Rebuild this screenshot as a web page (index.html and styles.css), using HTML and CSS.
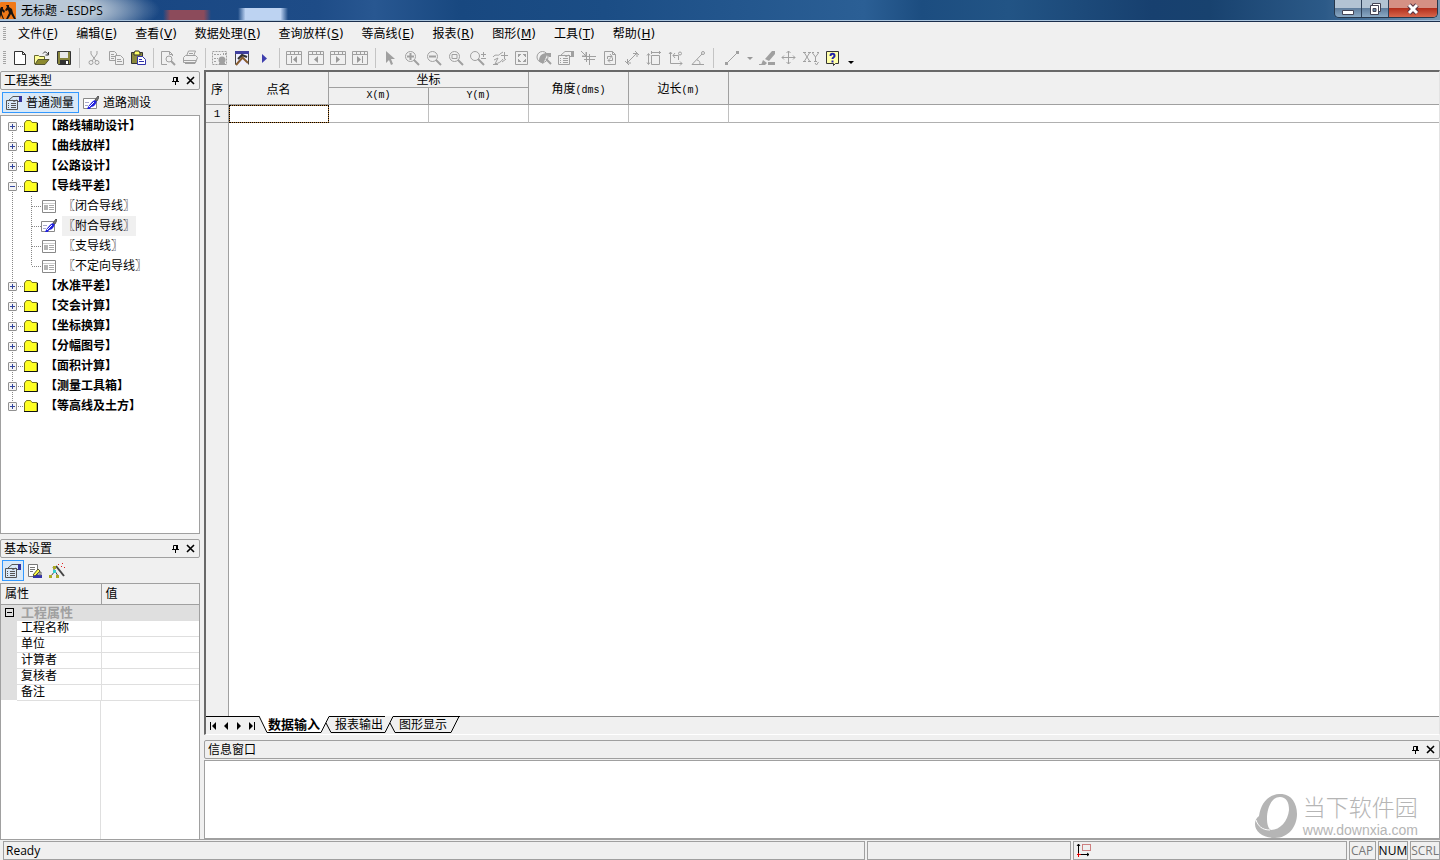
FILE: index.html
```
<!DOCTYPE html>
<html lang="zh-CN">
<head>
<meta charset="utf-8">
<title>无标题 - ESDPS</title>
<link rel="stylesheet" href="styles.css">
</head>
<body>
<svg class="defs" aria-hidden="true">
  <symbol id="new" viewBox="0 0 16 16"><path d="M2.500 1.500h8l3 3v10h-11zM10.500 1.500v3h3" fill="#fff" stroke="#333"/></symbol>
  <symbol id="open" viewBox="0 0 16 16"><path d="M.5 14V5.500h4l1 1h5v3" fill="#ff9" stroke="#663"/><path d="M1 14.500l3-5h11l-4 5z" fill="#8c8a2e" stroke="#553"/><path d="M9 3.500c2-3 4-1 5 1M14.500 2v3h-3" fill="none" stroke="#333"/></symbol>
  <symbol id="save" viewBox="0 0 16 16"><path d="M1.500 1.500h13v13h-12l-1-1z" fill="#86843c" stroke="#333"/><path d="M4 2h8v6H4z" fill="#e8e8e8"/><path d="M4 10h9v4H4z" fill="#333"/><path d="M10 11h2v3h-2z" fill="#fff"/></symbol>
  <symbol id="cut" viewBox="0 0 16 16"><path d="M5 1v3l5 7M11 1v3L6 11" class="ln"/><circle cx="5" cy="12.500" r="2" class="ln"/><circle cx="11" cy="12.500" r="2" class="ln"/></symbol>
  <symbol id="copy" viewBox="0 0 16 16"><path d="M1.500 1.500h5l2 2v7h-7zM3 4.500h3M3 6.500h4M3 8.500h3" class="ln"/><path d="M7.500 5.500h5l3 3v6h-8zM9 9.500h4M9 11.500h5" class="ln pale"/></symbol>
  <symbol id="paste" viewBox="0 0 16 16"><path d="M1.500 2.500h11v11h-11z" fill="#8c8a3c" stroke="#333"/><path d="M4 3l1-2h4l1 2v2H4z" fill="#ff6" stroke="#333"/><path d="M7.500 6.500h5l3 3v5h-8z" fill="#fff" stroke="#33a"/><path d="M9 9.500h3M9 11.500h5" stroke="#33a"/></symbol>
  <symbol id="preview" viewBox="0 0 16 16"><path d="M7 14.500H1.500v-13h8l3 3V6M9.500 1.500v3h3" class="ln"/><circle cx="9" cy="9" r="3" class="ln"/><path d="M11 11l4 4" class="thick"/></symbol>
  <symbol id="print" viewBox="0 0 16 16"><path d="M4.500 6l2-5h7l-2 5M7 3.500h4M1.500 7.500l2-2h10l2 2-2 5h-12zM2 10.500h12M3 13.500h10l1-2" class="ln"/></symbol>
  <symbol id="calc" viewBox="0 0 16 16"><path d="M.5 1.500h14v13H.5zM2 4.500h7M2 8.500h4M2 11.500h3M11.500 3v3M13.500 3v3" class="ln" stroke-dasharray="2 1"/><circle cx="10" cy="10" r="3.500" fill="#a0a0a0"/><path d="M7 13h6v2H7z" fill="#a0a0a0"/></symbol>
  <symbol id="hammer" viewBox="0 0 16 16"><path d="M1.500 14.500v-13h13v13" fill="#eef" stroke="#444"/><path d="M1 1h14v3H1z" fill="#3f3f9d"/><path d="M7 6l7 7M2 15l7-8" stroke="#875d30" stroke-width="2"/><path d="M4 9l4-4 5 2" fill="none" stroke="#333" stroke-width="2"/></symbol>
  <symbol id="run" viewBox="0 0 16 16"><path d="M6 4l5 4.500L6 13z" fill="#3f3fae"/></symbol>
  <symbol id="frame" viewBox="0 0 16 16"><path d="M.5 1.500h15v13H.5zM1 4.500h14M4.500 2v2M8.500 2v2M12.500 2v2" class="ln"/></symbol>
  <symbol id="cursor" viewBox="0 0 16 16"><path d="M4 1v12l3-3 2 5 2-1-2-5h4z" fill="#a0a0a0"/></symbol>
  <symbol id="glass" viewBox="0 0 16 16"><circle cx="6.500" cy="6.500" r="5" class="ln"/><path d="M10 10l5 5" class="thick"/></symbol>
  <symbol id="zoomin" viewBox="0 0 16 16"><use href="#glass"/><path d="M3 6.500h7M6.500 3v7" class="thick"/></symbol>
  <symbol id="zoomout" viewBox="0 0 16 16"><use href="#glass"/><path d="M3 6.500h7" class="thick"/></symbol>
  <symbol id="zoomwin" viewBox="0 0 16 16"><use href="#glass"/><path d="M4 4.500h5v4H4z" class="ln"/></symbol>
  <symbol id="zoomvar" viewBox="0 0 16 16"><circle cx="5" cy="6" r="4.500" class="ln"/><path d="M8 9l6 6" class="thick"/><path d="M11 4.500h5M13.500 2v5M11 8.500h5" class="ln"/></symbol>
  <symbol id="pan" viewBox="0 0 16 16"><path d="M1 7c3-4 5 0 7-3l3-2M2 10l4-2-3 6c4-1 6-2 8-5M9 5.500h7M12.500 2v7M10 12l4-3M1 14.500h5" class="ln"/></symbol>
  <symbol id="extent" viewBox="0 0 16 16"><path d="M1.500 1.500h12v13h-12zM4.500 7V4.500H7M9 4.500h2.500V7M11.500 9v2.500H9M7 11.500H4.500V9" class="ln"/><path d="M4 4l2 2M12 4l-2 2M12 12l-2-2M4 12l2-2" class="ln"/></symbol>
  <symbol id="find" viewBox="0 0 16 16"><circle cx="6.500" cy="7" r="5.500" class="ln"/><path d="M3 11c0-6 4-8 8-8h4v4h-2l-2-2-4 9z" fill="#a0a0a0"/><path d="M10 9l5 5" class="thick"/></symbol>
  <symbol id="props" viewBox="0 0 16 16"><path d="M.5 5.500h11v9H.5zM2 8.500h1M5 8.500h5M2 10.500h1M5 10.500h5M2 12.500h1M5 12.500h5M3 5l4-3.500h6M6 5l2 1.500L11 5l2 2" fill="none" stroke="currentColor"/><path d="M13 1h3v6h-3z" fill="var(--cuff)"/></symbol>
  <symbol id="cross" viewBox="0 0 16 16"><path d="M1 1l5 5M2 6.500h14M4 9.500h11M6.500 2v10M9.500 4v11M6 2v4H2" class="ln"/></symbol>
  <symbol id="refresh" viewBox="0 0 16 16"><path d="M2.500 1.500h8l3 3v10h-11zM10.500 1.500v3h3M5.500 9V6.500H10M8 4l2 2.500-2 2M10.500 7.500v3H6M8 8.500l-2 2 2 2" class="ln"/></symbol>
  <symbol id="dist" viewBox="0 0 16 16"><path d="M3 13L13 3M9 3.500h4V7M3.500 9v4H7M1 11l4 4M11 1l4 4" class="ln"/></symbol>
  <symbol id="rect" viewBox="0 0 16 16"><path d="M5.500 5.500h8v9h-8zM5 2.500h10M5.500 1v3M13.500 1v3M2.500 4v10M1 5.500l1.500-2 1.500 2M1 12.500l1.500 2 1.500-2" class="ln"/></symbol>
  <symbol id="coord" viewBox="0 0 16 16"><path d="M2.500 2v11.500H14M1 4l1.500-2L4 4M12 11.500l2 2-2 2M5 5.500h5.500V10M7 3L5 5.500 7 8" class="ln"/><circle cx="12" cy="3.500" r="1.500" class="ln"/></symbol>
  <symbol id="angle" viewBox="0 0 16 16"><path d="M14 14.500H2L12 4M7 10c2 0 3 2 3 4" class="ln"/><circle cx="13" cy="3" r="1.500" class="ln"/></symbol>
  <symbol id="line" viewBox="0 0 16 16"><path d="M2 14L14 2" class="ln"/><path d="M1 12h3v3H1zM12 1h3v3h-3z" fill="#a0a0a0"/></symbol>
  <symbol id="erase" viewBox="0 0 16 16"><path d="M6 9l7-8h3v3l-6 7zM4 10l4 3-2 2H2zM9 12h7v3H9zM0 14h5v1H0z" fill="#a0a0a0"/></symbol>
  <symbol id="move" viewBox="0 0 16 16"><path d="M7.500 1v13M1 7.500h13M5.500 3l2-2 2 2M5.500 12l2 2 2-2M3 5.500l-2 2 2 2M12 5.500l2 2-2 2" class="ln"/></symbol>
  <symbol id="xy" viewBox="0 0 16 16"><path d="M1.500 3l5 8M6.500 3l-5 8M0 2.500h3M5 2.500h3M0 11.500h3M5 11.500h3M9.500 3l3 4 3-4M12.500 7v4M9 2.500h2M14 2.500h2M11 11.500h3M12 13l1.500 2 2-3" class="ln"/></symbol>
  <symbol id="help" viewBox="0 0 16 16"><path d="M1.500 1.500h12v12h-3l-2 2v-2h-7z" fill="#ffa" stroke="#333"/><path d="M5.500 6c0-3 4-3 4 0 0 1.500-2 1-2 3" fill="none" stroke="#22a" stroke-width="2"/><path d="M6.500 10.500h2v2h-2z" fill="#22a"/></symbol>
  <symbol id="pen" viewBox="0 0 16 16"><path d="M.5 3.500h13v10H.5z" fill="#fff" stroke="#888"/><path d="M4 14c2-4 5-8 8-9l2 1c-1 3-3 6-6 6l-1 2z" fill="#22d"/><path d="M6 12l5-5" stroke="#fff"/><path d="M12 5l3-4 1 1-2 4z" fill="#777" stroke="#555"/><path d="M2 10.500h3M2 7.500h4" stroke="#aac"/></symbol>
  <symbol id="form" viewBox="0 0 16 16"><path d="M1.500 2.500h13v12h-13z" fill="#fff" stroke="#888"/><path d="M2 5.500h12" stroke="#ccc"/><path d="M3 7h4v5H3z" fill="#b5b5b5"/><path d="M8 7.500h5M8 9.500h5M8 11.500h5" stroke="#aaa"/></symbol>
  <symbol id="folder" viewBox="0 0 16 16"><path d="M1.500 5l2-2.500h4l1.500 2h5v9h-12.500z" fill="#ff2" stroke="#77751c"/><path d="M1 13.500h13.500V5" fill="none" stroke="#111"/></symbol>
  <symbol id="note" viewBox="0 0 16 16"><path d="M1.500 1.500h9v12h-9zM3 4.500h5M3 6.500h5M3 8.500h3" fill="#fff" stroke="#777"/><path d="M6 12h9v3H6z" fill="#33a"/><path d="M6 12l5-6 2 2-5 5z" fill="#ff4" stroke="#553"/><path d="M12 9h2v3h-2z" fill="#e8e8e8" stroke="#666"/></symbol>
  <symbol id="wand" viewBox="0 0 16 16"><path d="M7 3l8 10" stroke="#444" stroke-width="2"/><path d="M2 13l4-5 3 5M4 4l2 5" fill="none" stroke="#444"/><path d="M4 7h3v3H4z" fill="#3cc"/><path d="M0 12h3v3H0zM7 12h3v3H7zM4 3h3v3H4z" fill="#aa2"/><path d="M9 1h1v1H9zM13 0h1v1h-1zM15 4h1v1h-1zM12 3h1v1h-1z" fill="#d22"/></symbol>
  <symbol id="pin" viewBox="0 0 9 9"><path d="M2.500 5V1.500h4V5M1 5.500h7M4.500 6v3" fill="none" stroke="#000"/><path d="M5 1h2v4H5z"/></symbol>
  <symbol id="close" viewBox="0 0 9 9"><path d="M1 1l7 7M8 1L1 8" stroke="#000" stroke-width="1.600"/></symbol>
</svg>

<header class="titlebar">
  <svg class="logo" viewBox="0 0 16 18"><rect width="16" height="17" rx="1" fill="#f07818"/><path d="M1 5h2v2l2 2-1 2-2-2v3l2 5H3l-2-4-1 3V7zM6 3h3v2l3 2 1 4 3 6h-2l-3-5-3 5H6l3-6-1-3-2 1-1-1 2-3z" fill="#1b1410"/></svg>
  <h1>无标题 - ESDPS</h1>
  <div class="winbtns">
    <button aria-label="最小化"><svg viewBox="0 0 14 14"><path d="M1.500 8.500h11v4h-11z" fill="#fff" stroke="#445"/></svg></button>
    <button aria-label="还原"><svg viewBox="0 0 14 14"><path d="M4.500 1.500h8v8h-8z" fill="#fff" stroke="#445"/><path d="M2.500 3.500h8v9h-8z" fill="#fff" stroke="#445"/><path d="M5 6.500h3v3H5z" fill="#68a" stroke="#445"/></svg></button>
    <button class="quit" aria-label="关闭"><svg viewBox="0 0 14 14"><path d="M3 3l8 8M11 3l-8 8" stroke="#534" stroke-width="5"/><path d="M3 3l8 8M11 3l-8 8" stroke="#fff" stroke-width="3"/></svg></button>
  </div>
</header>

<nav class="menubar">
  <button>文件(<u>F</u>)</button><button>编辑(<u>E</u>)</button><button>查看(<u>V</u>)</button><button>数据处理(<u>R</u>)</button><button>查询放样(<u>S</u>)</button><button>等高线(<u>E</u>)</button><button>报表(<u>R</u>)</button><button>图形(<u>M</u>)</button><button>工具(<u>T</u>)</button><button>帮助(<u>H</u>)</button>
</nav>

<div class="toolbar">
  <button aria-label="新建"><svg><use href="#new"/></svg></button>
  <button aria-label="打开"><svg><use href="#open"/></svg></button>
  <button aria-label="保存"><svg><use href="#save"/></svg></button>
  <i class="sep"></i>
  <button aria-label="剪切"><svg><use href="#cut"/></svg></button>
  <button aria-label="复制"><svg><use href="#copy"/></svg></button>
  <button aria-label="粘贴"><svg><use href="#paste"/></svg></button>
  <i class="sep"></i>
  <button aria-label="打印预览"><svg><use href="#preview"/></svg></button>
  <button aria-label="打印"><svg><use href="#print"/></svg></button>
  <i class="sep"></i>
  <button aria-label="计算设置"><svg><use href="#calc"/></svg></button>
  <button aria-label="工具"><svg><use href="#hammer"/></svg></button>
  <button aria-label="运行"><svg><use href="#run"/></svg></button>
  <i class="sep"></i>
  <button aria-label="首条"><svg viewBox="0 0 16 16"><use href="#frame"/><path d="M5 6h1v7H5zM11 6v7L7 9.500z" fill="#999"/></svg></button>
  <button aria-label="上一条"><svg viewBox="0 0 16 16"><use href="#frame"/><path d="M10 6v7L6 9.500z" fill="#999"/></svg></button>
  <button aria-label="下一条"><svg viewBox="0 0 16 16"><use href="#frame"/><path d="M6 6v7l4-3.500z" fill="#999"/></svg></button>
  <button aria-label="末条"><svg viewBox="0 0 16 16"><use href="#frame"/><path d="M5 6v7l4-3.500zM10 6h1v7h-1z" fill="#999"/></svg></button>
  <i class="sep"></i>
  <button aria-label="选择"><svg><use href="#cursor"/></svg></button>
  <button aria-label="放大"><svg><use href="#zoomin"/></svg></button>
  <button aria-label="缩小"><svg><use href="#zoomout"/></svg></button>
  <button aria-label="窗口缩放"><svg><use href="#zoomwin"/></svg></button>
  <button aria-label="动态缩放"><svg><use href="#zoomvar"/></svg></button>
  <button aria-label="平移"><svg><use href="#pan"/></svg></button>
  <button aria-label="全图"><svg><use href="#extent"/></svg></button>
  <button aria-label="查找"><svg><use href="#find"/></svg></button>
  <button aria-label="属性"><svg><use href="#props"/></svg></button>
  <button aria-label="捕捉"><svg><use href="#cross"/></svg></button>
  <button aria-label="刷新"><svg><use href="#refresh"/></svg></button>
  <button aria-label="距离"><svg><use href="#dist"/></svg></button>
  <button aria-label="面积"><svg><use href="#rect"/></svg></button>
  <button aria-label="坐标"><svg><use href="#coord"/></svg></button>
  <button aria-label="角度"><svg><use href="#angle"/></svg></button>
  <i class="sep wide"></i>
  <button aria-label="画线"><svg><use href="#line"/></svg></button>
  <button class="drop" aria-label="线型"></button>
  <button aria-label="擦除"><svg><use href="#erase"/></svg></button>
  <button aria-label="移动"><svg><use href="#move"/></svg></button>
  <button aria-label="坐标标注"><svg><use href="#xy"/></svg></button>
  <button aria-label="帮助"><svg><use href="#help"/></svg></button>
  <button class="drop more" aria-label="更多"></button>
</div>

<main class="work">
  <aside class="side">
    <section class="pane types">
      <header class="caption"><h2>工程类型</h2><button aria-label="固定"><svg><use href="#pin"/></svg></button><button aria-label="关闭"><svg><use href="#close"/></svg></button></header>
      <div class="modes">
        <button class="on"><svg><use href="#props"/></svg><span>普通测量</span></button>
        <button><svg><use href="#pen"/></svg><span>道路测设</span></button>
      </div>
      <ul class="tree">
        <li><div class="row"><button class="exp" aria-label="展开"></button><svg><use href="#folder"/></svg><span>【路线辅助设计】</span></div></li>
        <li><div class="row"><button class="exp" aria-label="展开"></button><svg><use href="#folder"/></svg><span>【曲线放样】</span></div></li>
        <li><div class="row"><button class="exp" aria-label="展开"></button><svg><use href="#folder"/></svg><span>【公路设计】</span></div></li>
        <li><div class="row"><button class="exp opened" aria-label="折叠"></button><svg><use href="#folder"/></svg><span>【导线平差】</span></div>
          <ul>
            <li><svg><use href="#form"/></svg><span>〖闭合导线〗</span></li>
            <li><svg><use href="#pen"/></svg><span class="picked">〖附合导线〗</span></li>
            <li><svg><use href="#form"/></svg><span>〖支导线〗</span></li>
            <li><svg><use href="#form"/></svg><span>〖不定向导线〗</span></li>
          </ul>
        </li>
        <li><div class="row"><button class="exp" aria-label="展开"></button><svg><use href="#folder"/></svg><span>【水准平差】</span></div></li>
        <li><div class="row"><button class="exp" aria-label="展开"></button><svg><use href="#folder"/></svg><span>【交会计算】</span></div></li>
        <li><div class="row"><button class="exp" aria-label="展开"></button><svg><use href="#folder"/></svg><span>【坐标换算】</span></div></li>
        <li><div class="row"><button class="exp" aria-label="展开"></button><svg><use href="#folder"/></svg><span>【分幅图号】</span></div></li>
        <li><div class="row"><button class="exp" aria-label="展开"></button><svg><use href="#folder"/></svg><span>【面积计算】</span></div></li>
        <li><div class="row"><button class="exp" aria-label="展开"></button><svg><use href="#folder"/></svg><span>【测量工具箱】</span></div></li>
        <li><div class="row"><button class="exp" aria-label="展开"></button><svg><use href="#folder"/></svg><span>【等高线及土方】</span></div></li>
      </ul>
    </section>
    <section class="pane settings">
      <header class="caption"><h2>基本设置</h2><button aria-label="固定"><svg><use href="#pin"/></svg></button><button aria-label="关闭"><svg><use href="#close"/></svg></button></header>
      <div class="modes">
        <button class="on" aria-label="属性"><svg><use href="#props"/></svg></button>
        <button aria-label="编辑"><svg><use href="#note"/></svg></button>
        <button aria-label="向导"><svg><use href="#wand"/></svg></button>
      </div>
      <div class="props">
        <table>
          <colgroup><col class="gutter"><col class="name"><col></colgroup>
          <thead><tr><th colspan="2">属性</th><th>值</th></tr></thead>
          <tbody>
            <tr class="group"><td><button class="fold" aria-label="折叠"></button></td><th colspan="2">工程属性</th></tr>
            <tr><td></td><th>工程名称</th><td></td></tr>
            <tr><td></td><th>单位</th><td></td></tr>
            <tr><td></td><th>计算者</th><td></td></tr>
            <tr><td></td><th>复核者</th><td></td></tr>
            <tr><td></td><th>备注</th><td></td></tr>
          </tbody>
        </table>
        <div class="blank"></div>
      </div>
    </section>
  </aside>

  <div class="center">
    <section class="sheet">
      <div class="gridarea">
        <table class="grid">
          <colgroup><col class="num"><col class="data"><col class="data"><col class="data"><col class="data"><col class="data"><col></colgroup>
          <thead>
            <tr><th rowspan="2">序</th><th rowspan="2">点名</th><th colspan="2">坐标</th><th rowspan="2">角度<span class="mono">(dms)</span></th><th rowspan="2">边长<span class="mono">(m)</span></th><th rowspan="2" class="rest"></th></tr>
            <tr><th class="mono">X(m)</th><th class="mono">Y(m)</th></tr>
          </thead>
          <tbody><tr><th class="mono">1</th><td class="cur"></td><td></td><td></td><td></td><td></td><td class="rest"></td></tr></tbody>
        </table>
      </div>
      <div class="tabs">
        <div class="nav">
          <button aria-label="第一页"><svg viewBox="0 0 8 8"><path d="M1 0h1v8H1zM7 0v8L3 4z"/></svg></button>
          <button aria-label="上一页"><svg viewBox="0 0 8 8"><path d="M6 0v8L2 4z"/></svg></button>
          <button aria-label="下一页"><svg viewBox="0 0 8 8"><path d="M2 0v8l4-4z"/></svg></button>
          <button aria-label="最后一页"><svg viewBox="0 0 8 8"><path d="M1 0v8l4-4zM6 0h1v8H6z"/></svg></button>
        </div>
        <svg class="edge" viewBox="0 0 8 17" width="8" height="17"><path d="M0 0h8v17z" fill="#fff"/><path d="M0 0l8 16.500" stroke="#000"/></svg>
        <button class="tab active">数据输入</button>
        <svg class="edge" viewBox="0 0 12 17" width="12" height="17"><path d="M0 0h8L0 17z" fill="#fff"/><path d="M0 16.500L8 .5h4M5 7l5 9.500h2" fill="none" stroke="#000"/></svg>
        <button class="tab">报表输出</button>
        <svg class="edge" viewBox="0 0 12 17" width="12" height="17"><path d="M0 16.500L8 .5h4M5 7l5 9.500h2" fill="none" stroke="#000"/></svg>
        <button class="tab last">图形显示</button>
        <svg class="edge" viewBox="0 0 9 17" width="9" height="17"><path d="M0 16.500L8 .5M0 .5h9" fill="none" stroke="#000"/></svg>
        <div class="fill"></div>
      </div>
    </section>
    <section class="info">
      <header class="caption"><h2>信息窗口</h2><button aria-label="固定"><svg><use href="#pin"/></svg></button><button aria-label="关闭"><svg><use href="#close"/></svg></button></header>
      <div class="log">
        <div class="mark">
          <svg viewBox="0 0 42 44"><path fill-rule="evenodd" d="M24 0C35-1 42 8 42 20c0 13-9 24-22 24C8 44 0 38 0 30c0-3 1-6 4-8C6 10 12 1 24 0zM25 3c-9 0-13 12-13 21 0 6 1 10 4 12 9 0 17-9 18-20 0-8-3-13-9-13z" fill="#b5b5b5"/><path d="M1 26c2 6 6 10 14 10" fill="none" stroke="#fff"/></svg>
          <div><strong>当下软件园</strong><span>www.downxia.com</span></div>
        </div>
      </div>
    </section>
  </div>
</main>

<footer class="status">
  <span class="msg">Ready</span><span class="pos"></span>
  <span class="axis"><svg viewBox="0 0 16 14"><path d="M2.500 1v11M1 3l1.500-2L4 3M2 11.500h11M11 10l2 1.500-2 1.500" fill="none" stroke="#000"/><path d="M6.500 1.500h8v6h-8z" fill="none" stroke="#a11" stroke-dasharray="1 1"/><path d="M1 11h4v1H1zM2 10h1v4H2z" fill="#d00"/></svg></span>
  <span class="key">CAP</span><span class="key lit">NUM</span><span class="key">SCRL</span>
</footer>
</body>
</html>
```
FILE: styles.css
```
* { box-sizing: border-box; }
body {
  margin: 0;
  height: 100vh;
  display: flex;
  flex-direction: column;
  background: #f0f0f0;
  color: #000;
  font: 12px/16px "DejaVu Sans", "Noto Sans CJK SC", sans-serif;
  overflow: hidden;
}
button { margin: 0; padding: 0; border: 0; background: none; font: inherit; color: inherit; }
h1, h2 { margin: 0; font: inherit; }
ul { margin: 0; padding: 0; list-style: none; }
table { border-collapse: collapse; width: 100%; }
th, td { padding: 0; font-weight: normal; }
svg { display: block; width: 16px; height: 16px; flex: none; }
.defs { display: none; }
.ln { fill: none; stroke: #a0a0a0; }
.pale { fill: #f0f0f0; }
.thick { fill: none; stroke: #a0a0a0; stroke-width: 2; }

.titlebar {
  flex: none;
  display: flex;
  height: 22px;
  border-bottom: 1px solid #1b2f4c;
  box-shadow: inset 0 -1px #a9c3dc;
  background:
    linear-gradient(90deg, transparent, #bdd3f2 15% 85%, transparent) 238px 8px / 50px 14px no-repeat,
    linear-gradient(90deg, transparent, #8c4b5b 15% 85%, transparent) 163px 10px / 48px 12px no-repeat,
    radial-gradient(ellipse 110px 28px at 50px 10px, #bac8d7 40%, transparent 100%),
    linear-gradient(90deg, #6b88a8 0, #194783 10%, #1e4c87 22%, #285791 26%, #184880 32%, #1b4d85 42%, #2b5f95 60%, #1c4d80 64%, #225485 70%, #17406f 80%, #18426f 84%, #2c5a88 92%, #7899b5 100%);
}
.logo { width: 16px; height: 18px; margin-top: 2px; }
.titlebar h1 { flex: 1; padding-left: 5px; line-height: 22px; font-family: "Open Sans", "Noto Sans CJK SC", sans-serif; }
.winbtns {
  display: flex;
  height: 18px;
  margin-right: 2px;
  border: 1px solid #26374b;
  border-top: 0;
  border-radius: 0 0 5px 5px;
  overflow: hidden;
}
.winbtns button { width: 27px; display: grid; place-items: center; border-right: 1px solid #2d4058; background: linear-gradient(#b2c3d3 45%, #607e9d 50%, #8ba9c4); }
.winbtns .quit { width: 48px; border: 0; background: linear-gradient(#d59084 45%, #b4301d 50%, #d7674d); }
.winbtns svg { width: 14px; height: 14px; }

.menubar { flex: none; display: flex; gap: 18px; height: 24px; padding-left: 18px; align-items: center; }
.menubar, .toolbar { background: repeating-linear-gradient(#a5a5a5 0 1px, transparent 1px 2px) 3px 5px / 3px 14px no-repeat; }

.toolbar { flex: none; display: flex; align-items: center; height: 24px; padding-left: 9px; color: #a0a0a0; --cuff: #a0a0a0; }
.toolbar button { width: 22px; height: 22px; display: grid; place-items: center; }
.sep { width: 8px; height: 20px; background: linear-gradient(#c4c4c4, #c4c4c4) 4px 0 / 1px 20px no-repeat; }
.sep.wide { width: 12px; }
.toolbar .drop { width: 13px; }
.drop::before { content: ""; border: 3px solid transparent; border-top-color: #999; border-bottom: 0; }
.toolbar .more { padding-top: 8px; }
.drop.more::before { border-top-color: #000; }

.work { flex: 1; min-height: 0; display: flex; gap: 4px; padding-top: 1px; }
.side { width: 200px; flex: none; display: flex; flex-direction: column; gap: 5px; --cuff: #33339c; }
.pane { display: flex; flex-direction: column; }
.types { flex: 1; min-height: 0; }
.settings { flex: 0 0 300px; }
.caption { flex: none; display: flex; align-items: center; height: 19px; border: 1px solid #a0a0a0; border-radius: 2px; padding: 0 4px 0 3px; gap: 6px; }
.caption h2 { flex: 1; padding-top: 1px; }
.caption svg { width: 9px; height: 9px; }
.modes { flex: none; display: flex; align-items: center; height: 25px; padding: 0 2px; }
.modes button { display: flex; align-items: center; gap: 4px; height: 21px; padding: 0 4px 0 3px; border: 1px solid transparent; }
.modes span { padding-top: 1px; }
.modes svg { color: #555; }
.modes .on { border-color: #3399ff; background: #d9e9f8; }
.settings .modes button { padding: 0 2px; }

.tree { flex: 1; background: #fff; border: 1px solid #a0a0a0; }
.tree > li { background: repeating-linear-gradient(#888 0 1px, transparent 1px 2px) 11px 0 / 1px 100% no-repeat; }
.tree > li:first-child { background-position: 11px 10px; }
.tree > li:last-child { background-size: 1px 10px; }
.row {
  display: flex;
  align-items: center;
  height: 20px;
  padding-left: 7px;
  font-weight: bold;
  background: repeating-linear-gradient(90deg, #888 0 1px, transparent 1px 2px) 17px 10px / 6px 1px no-repeat;
}
.row svg { margin-left: 6px; }
.row span { margin-left: 6px; }
.exp {
  width: 9px;
  height: 9px;
  border: 1px solid #919191;
  border-radius: 1px;
  background:
    linear-gradient(#33479c, #33479c) 1px 3px / 5px 1px no-repeat,
    linear-gradient(#33479c, #33479c) 3px 1px / 1px 5px no-repeat,
    #f4f4f4;
}
.exp.opened { background: linear-gradient(#33479c, #33479c) 1px 3px / 5px 1px no-repeat, #f4f4f4; }
.tree ul li {
  display: flex;
  align-items: center;
  height: 20px;
  padding-left: 40px;
  background:
    repeating-linear-gradient(#888 0 1px, transparent 1px 2px) 30px 0 / 1px 20px no-repeat,
    repeating-linear-gradient(90deg, #888 0 1px, transparent 1px 2px) 31px 10px / 9px 1px no-repeat;
}
.tree ul li:last-child { background-size: 1px 10px, 9px 1px; }
.tree ul span { margin-left: 5px; padding: 2px 1px; }
.picked { background: #f0f0f0; }

.props { flex: 1; display: flex; flex-direction: column; background: #fff; border: 1px solid #a0a0a0; border-bottom: 0; }
.props table { table-layout: fixed; }
.gutter { width: 16px; }
.name { width: 84px; }
.props th { text-align: left; white-space: nowrap; }
.props thead th { height: 20px; background: #f0f0f0; border-bottom: 1px solid #a0a0a0; padding-left: 4px; }
.props thead th:first-child { border-right: 1px solid #a0a0a0; }
.props tbody tr { height: 16px; line-height: 15px; }
.props tbody td:first-child { background: #dfdfdf; }
.props tbody th { padding-left: 4px; border-bottom: 1px solid #dfdfdf; }
.props tbody th + td { border-left: 1px solid #dfdfdf; border-bottom: 1px solid #dfdfdf; }
.props .group th { background: #dfdfdf; color: #a0a0a0; font-weight: bold; font-size: 13px; }
.blank { flex: 1; background: linear-gradient(#dfdfdf, #dfdfdf) 99px 0 / 1px 100% no-repeat; }
.fold { display: block; width: 9px; height: 9px; margin-left: 4px; border: 1px solid #000; background: linear-gradient(#000, #000) 1px 3px / 5px 1px no-repeat; }

.center { flex: 1; min-width: 0; display: flex; flex-direction: column; gap: 5px; }
.sheet { flex: 1; min-height: 0; display: flex; flex-direction: column; border: 1px solid #a0a0a0; border-top: 2px solid #696969; border-left: 2px solid #696969; border-right-color: #e3e3e3; border-bottom-color: #fff; margin-top: -1px; }
.gridarea { flex: 1; background: linear-gradient(90deg, #f0f0f0 22px, #a0a0a0 22px 23px, #fff 23px); }
.grid { table-layout: fixed; border-collapse: separate; border-spacing: 0; text-align: center; }
.num { width: 23px; }
.data { width: 100px; }
.grid th { background: #f0f0f0; border-right: 1px solid #a0a0a0; border-bottom: 1px solid #a0a0a0; }
.grid thead th { height: 16px; line-height: 15px; }
.grid thead tr + tr th { height: 17px; line-height: 16px; }
.grid thead th[rowspan] { padding-top: 4px; }
.grid thead th[colspan] { line-height: 14px; padding-top: 1px; }
.grid tbody tr { height: 18px; }
.grid td { border-right: 1px solid #c0c0c0; border-bottom: 1px solid #b0b0b0; }
.grid .rest { border-right: 0; }
.grid .cur { border: 1px dotted #000; background: linear-gradient(#fff, #fff) padding-box, #b8803c border-box; }
.mono { font-family: "Liberation Mono", monospace; font-size: 10px; }
tbody .mono { font-size: 11px; }

.tabs { flex: none; display: flex; height: 18px; }
.nav { display: flex; width: 53px; border-top: 1px solid #000; }
.nav button { width: 13px; display: grid; place-items: center; }
.nav svg { width: 8px; height: 8px; }
.edge { width: auto; height: 17px; }
.tab { height: 17px; line-height: 14px; border-top: 1px solid #000; border-bottom: 1px solid #000; padding: 0 2px; }
.tab.last { padding-right: 4px; }
.tab.active { border-top-color: #fff; background: #fff; font-weight: bold; font-size: 13px; padding: 0 1px; }
.fill { flex: 1; border-top: 1px solid #888; }

.info { flex: none; display: flex; flex-direction: column; gap: 1px; }
.log { height: 79px; display: flex; justify-content: flex-end; align-items: flex-end; background: #fff; border: 1px solid #a0a0a0; }
.mark { display: flex; gap: 6px; align-items: center; padding-right: 21px; color: #b5b5b5; font-family: "Liberation Sans", "Noto Sans CJK SC", sans-serif; }
.mark svg { width: 42px; height: 44px; }
.mark strong { display: block; font-size: 23px; line-height: 28px; font-weight: 300; }
.mark span { display: block; font-size: 14px; line-height: 16px; }

.status { flex: none; display: flex; gap: 2px; height: 21px; padding: 1px 0 0 3px; border-top: 1px solid #a0a0a0; font-family: "Open Sans", sans-serif; }
.status span { flex: none; border: 1px solid #a0a0a0; line-height: 17px; padding-left: 2px; }
.status .msg { flex: 1; }
.status .pos { width: 204px; }
.status .axis { width: 274px; }
.status .key { min-width: 27px; padding: 0; text-align: center; color: #777; }
.status .lit { color: #000; }
```
